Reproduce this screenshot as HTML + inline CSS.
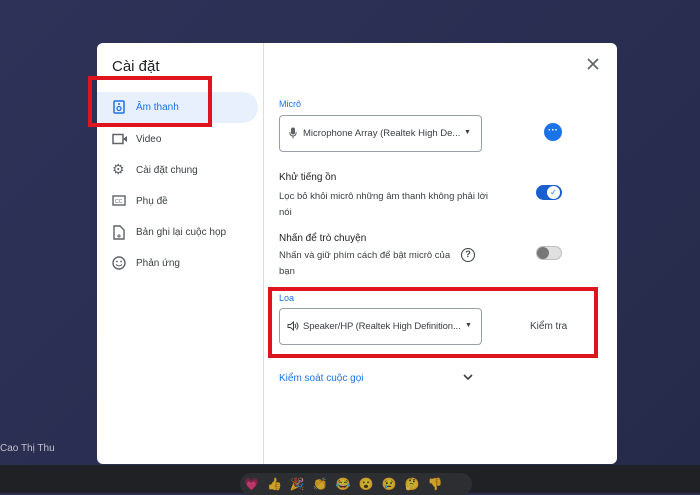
<!DOCTYPE html>
<html><head><meta charset="utf-8"><style>
*{margin:0;padding:0;box-sizing:border-box}
body{width:700px;height:493px;overflow:hidden;background:#2a2e52;font-family:"Liberation Sans",sans-serif;position:relative;color:#3c4043}
.a{position:absolute}
.t{font-size:10px;color:#3c4043;white-space:nowrap}
.blue{color:#1a73e8}
.red{position:absolute;border:4px solid #e0141e}
</style></head><body>
<div class="a" style="left:0;top:0;width:700px;height:465px;background:linear-gradient(135deg,#2e3258,#262a4a)"></div>
<div class="a" style="left:0;top:465px;width:700px;height:28px;background:#202124"></div>
<div class="a" style="left:240px;top:473px;width:232px;height:22px;border-radius:11px;background:#2d2e31"></div>
<div class="a" style="left:244px;top:476px;font-size:12px;letter-spacing:8px;line-height:16px;opacity:.75">💗👍🎉👏😂😮😢🤔👎</div>
<div class="a" style="left:0;top:443px;color:#c0c2cc;font-size:10px">Cao Thị Thu</div>
<div class="a" style="left:97px;top:43px;width:520px;height:421px;background:#fff;border-radius:6px"></div>
<div class="a" style="left:263px;top:43px;width:1px;height:421px;background:#dadce0"></div>
<div class="a" style="left:112px;top:58px;font-size:15px;color:#202124">Cài đặt</div>
<svg class="a" style="left:587px;top:58px" width="12" height="12"><path d="M1 1l10 10M11 1L1 11" stroke="#5f6368" stroke-width="1.6"/></svg>
<div class="a" style="left:97px;top:92px;width:161px;height:31px;background:#e8f0fe;border-radius:0 16px 16px 0"></div>
<svg class="a" style="left:113px;top:100px" width="12" height="14"><rect x="1" y="1" width="10" height="12" rx="1" fill="none" stroke="#1a73e8" stroke-width="1.5"/><circle cx="6" cy="8.5" r="2" fill="none" stroke="#1a73e8" stroke-width="1.3"/><circle cx="6" cy="4" r="1" fill="#1a73e8"/></svg>
<div class="a t blue" style="left:136px;top:102px">Âm thanh</div>
<svg class="a" style="left:112px;top:133px" width="16" height="12"><rect x="1" y="1.5" width="10" height="9" fill="none" stroke="#5f6368" stroke-width="1.5"/><path d="M11 6l4-3v6z" fill="#5f6368"/></svg>
<div class="a t" style="left:136px;top:134px">Video</div>
<div class="a" style="left:112px;top:161px;font-size:14px;color:#5f6368">⚙</div>
<div class="a t" style="left:136px;top:165px">Cài đặt chung</div>
<svg class="a" style="left:112px;top:195px" width="14" height="11"><rect x="1" y="1" width="12" height="9" fill="none" stroke="#5f6368" stroke-width="1.4"/><text x="3" y="8" font-size="5" fill="#5f6368">CC</text></svg>
<div class="a t" style="left:136px;top:196px">Phụ đề</div>
<svg class="a" style="left:113px;top:225px" width="12" height="15"><path d="M1 1h6l4 4v9H1z" fill="none" stroke="#5f6368" stroke-width="1.4"/><path d="M6 9v4M4 11h4" stroke="#5f6368"/></svg>
<div class="a t" style="left:136px;top:227px">Bản ghi lại cuộc họp</div>
<svg class="a" style="left:112px;top:256px" width="14" height="14"><circle cx="7" cy="7" r="6" fill="none" stroke="#5f6368" stroke-width="1.4"/><circle cx="5" cy="5.5" r=".9" fill="#5f6368"/><circle cx="9" cy="5.5" r=".9" fill="#5f6368"/><path d="M4 8.5q3 3 6 0" fill="none" stroke="#5f6368"/></svg>
<div class="a t" style="left:136px;top:258px">Phản ứng</div>
<div class="red" style="left:88px;top:76px;width:124px;height:51px"></div>

<div class="a blue" style="left:279px;top:99px;font-size:9px">Micrô</div>
<div class="a" style="left:279px;top:115px;width:203px;height:37px;border:1px solid #9aa0a6;border-radius:4px"></div>
<svg class="a" style="left:289px;top:127px" width="8" height="12"><rect x="2" y="0.5" width="4" height="7" rx="2" fill="#5f6368"/><path d="M0.8 5q0 4 3.2 4t3.2-4M4 9v2.5" fill="none" stroke="#5f6368" stroke-width="1"/></svg>
<div class="a t" style="left:303px;top:128px;font-size:9.5px">Microphone Array (Realtek High De...</div>
<div class="a" style="left:464px;top:129px;font-size:7px">▼</div>
<div class="a" style="left:544px;top:123px;width:18px;height:18px;border-radius:50%;background:#1a73e8;color:#fff;font-size:10px;text-align:center;line-height:15px;font-weight:bold">···</div>
<div class="a t" style="left:279px;top:172px;color:#202124">Khử tiếng ồn</div>
<div class="a" style="left:279px;top:189px;font-size:9.5px;line-height:16px;width:212px">Lọc bỏ khỏi micrô những âm thanh không phải lời nói</div>
<div class="a" style="left:536px;top:185px;width:26px;height:15px;border-radius:8px;background:#1a5fd0"></div>
<div class="a" style="left:547px;top:186px;width:13px;height:13px;border-radius:50%;background:#fff;font-size:8px;color:#1a73e8;text-align:center;line-height:13px">✓</div>
<div class="a t" style="left:279px;top:233px;color:#202124">Nhấn để trò chuyện</div>
<div class="a" style="left:279px;top:248px;font-size:9.5px;line-height:16px;width:180px">Nhấn và giữ phím cách để bật micrô của bạn</div>
<div class="a" style="left:461px;top:248px;width:14px;height:14px;border:1.5px solid #3c4043;border-radius:50%;font-size:9px;text-align:center;line-height:11px;font-weight:bold">?</div>
<div class="a" style="left:536px;top:246px;width:26px;height:14px;border-radius:7px;background:#e0e0e0;border:1px solid #bdbdbd"></div>
<div class="a" style="left:537px;top:247px;width:12px;height:12px;border-radius:50%;background:#777"></div>

<div class="a blue" style="left:279px;top:293px;font-size:9px">Loa</div>
<div class="a" style="left:279px;top:308px;width:203px;height:37px;border:1px solid #9aa0a6;border-radius:4px"></div>
<svg class="a" style="left:287px;top:321px" width="12" height="10"><path d="M1 3.5h2.5l3-2.5v8l-3-2.5H1z" fill="none" stroke="#3c4043" stroke-width="1"/><path d="M8 3q1.5 2 0 4M9.5 1.5q3 3.5 0 7" fill="none" stroke="#3c4043" stroke-width="1"/></svg>
<div class="a t" style="left:303px;top:321px;font-size:9.5px;letter-spacing:-0.1px">Speaker/HP (Realtek High Definition...</div>
<div class="a" style="left:465px;top:322px;font-size:7px">▼</div>
<div class="a t" style="left:530px;top:321px">Kiểm tra</div>
<div class="red" style="left:268px;top:287px;width:330px;height:71px"></div>
<div class="a blue" style="left:279px;top:373px;font-size:10px">Kiểm soát cuộc gọi</div>
<svg class="a" style="left:463px;top:373px" width="10" height="8"><path d="M1 2l4 4 4-4" fill="none" stroke="#3c4043" stroke-width="1.6"/></svg>
</body></html>
